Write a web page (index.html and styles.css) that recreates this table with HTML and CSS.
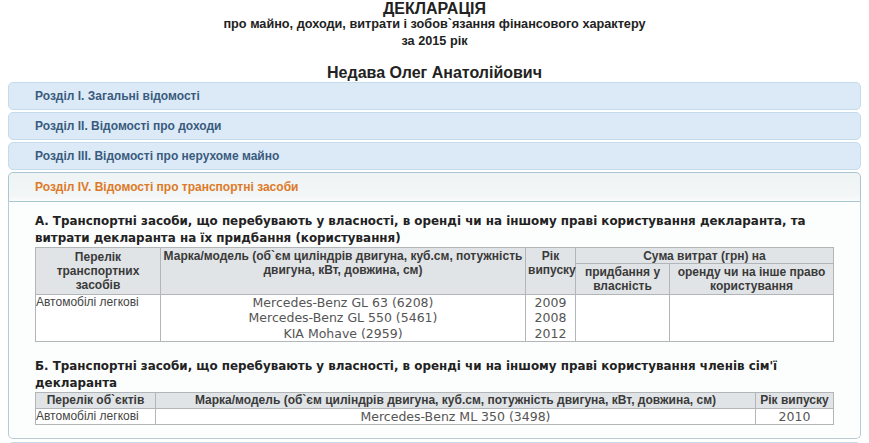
FILE: index.html
```html
<!DOCTYPE html>
<html lang="uk">
<head>
<meta charset="utf-8">
<title>Декларація</title>
<link rel="stylesheet" href="styles.css">
</head>
<body>
<header class="doc-head">
  <h1 class="doc-title">ДЕКЛАРАЦІЯ</h1>
  <p class="doc-sub">про майно, доходи, витрати і зобов`язання фінансового характеру</p>
  <p class="doc-sub year">за 2015 рік</p>
  <h2 class="person">Недава Олег Анатолійович</h2>
</header>
<div class="accordion">
  <h3 class="acc-head">Розділ I. Загальні відомості</h3>
  <h3 class="acc-head">Розділ II. Відомості про доходи</h3>
  <h3 class="acc-head">Розділ III. Відомості про нерухоме майно</h3>
  <h3 class="acc-head active">Розділ IV. Відомості про транспортні засоби</h3>
  <div class="acc-content">
    <h4 class="sec-title">А. Транспортні засоби, що перебувають у власності, в оренді чи на іншому праві користування декларанта, та витрати декларанта на їх придбання (користування)</h4>
    <table class="grid grid-a">
      <colgroup>
        <col class="c1"><col class="c2"><col class="c3"><col class="c4"><col class="c5">
      </colgroup>
      <thead>
        <tr class="row-top">
          <th rowspan="2">Перелік транспортних засобів</th>
          <th rowspan="2" class="top">Марка/модель (об`єм циліндрів двигуна, куб.см, потужність двигуна, кВт, довжина, см)</th>
          <th rowspan="2" class="top">Рік випуску</th>
          <th colspan="2">Сума витрат (грн) на</th>
        </tr>
        <tr class="row-sub">
          <th>придбання у власність</th>
          <th>оренду чи на інше право користування</th>
        </tr>
      </thead>
      <tbody>
        <tr class="row-data">
          <td class="kind">Автомобілі легкові</td>
          <td class="mid">Mercedes-Benz GL 63 (6208)<br>Mercedes-Benz GL 550 (5461)<br>KIA Mohave (2959)</td>
          <td class="mid">2009<br>2008<br>2012</td>
          <td></td>
          <td></td>
        </tr>
      </tbody>
    </table>
    <h4 class="sec-title sec-b">Б. Транспортні засоби, що перебувають у власності, в оренді чи на іншому праві користування членів сім'ї декларанта</h4>
    <table class="grid grid-b">
      <colgroup>
        <col class="b1"><col class="b2"><col class="b3">
      </colgroup>
      <thead>
        <tr class="row-one">
          <th>Перелік об`єктів</th>
          <th>Марка/модель (об`єм циліндрів двигуна, куб.см, потужність двигуна, кВт, довжина, см)</th>
          <th>Рік випуску</th>
        </tr>
      </thead>
      <tbody>
        <tr class="row-one">
          <td class="kind">Автомобілі легкові</td>
          <td class="mid">Mercedes-Benz ML 350 (3498)</td>
          <td class="mid">2010</td>
        </tr>
      </tbody>
    </table>
  </div>
  <h3 class="acc-head">Розділ V. Відомості про вклади у банках, цінні папери та інші активи</h3>
</div>
</body>
</html>
```

FILE: styles.css
```css
html, body {
  margin: 0;
  padding: 0;
  background: #ffffff;
}
body {
  padding: 0 8px;
  font-family: "Liberation Sans", Arial, sans-serif;
  color: #222;
}
.doc-head {
  text-align: center;
}
.doc-title {
  margin: 0;
  font-size: 16px;
  line-height: 17px;
  font-weight: bold;
  color: #222;
}
.doc-sub {
  margin: 0;
  font-size: 12.7px;
  line-height: 14px;
  font-weight: bold;
  color: #222;
}
.doc-sub.year {
  margin-top: 3px;
}
.person {
  margin: 16px 0 0;
  font-size: 16px;
  line-height: 18px;
  font-weight: bold;
  color: #222;
}
.accordion {
  margin-top: 0;
}
.acc-head {
  margin: 2px 0 0;
  padding: 6px 6px 6px 26px;
  font-size: 12px;
  line-height: 14px;
  font-weight: bold;
  color: #3a5b7d;
  background: #dceaf8;
  border: 1px solid #c5dbec;
  border-radius: 5px;
}
.acc-head:first-child {
  margin-top: 0;
}
.acc-head:last-child {
  margin-top: 3px;
}
.acc-head.active {
  padding-top: 7px;
  padding-bottom: 7px;
  color: #dd7a28;
  background: linear-gradient(#eef3f4, #f3f6f7 80%, #fafbfb);
  border-color: #a9c6d4;
  border-radius: 5px 5px 0 0;
  margin-bottom: 0;
}
.acc-content {
  border: 1px solid #b9ccd6;
  border-top: 0;
  border-radius: 0 0 5px 5px;
  background: #fcfdfd;
  padding: 11px 26px 13px;
}
.sec-title {
  margin: 0;
  font-family: "DejaVu Sans", Verdana, sans-serif;
  font-size: 11.9px;
  line-height: 17px;
  font-weight: bold;
  color: #222;
}
.sec-b {
  margin-top: 16px;
}
.grid {
  width: 100%;
  border-collapse: collapse;
  table-layout: fixed;
  margin-top: 0;
}
.grid th, .grid td {
  border: 1px solid #b3b6b8;
  padding: 0 2px;
  color: #333;
}
.grid th {
  background: #e1e4e7;
  font-family: "Liberation Sans", Arial, sans-serif;
  font-size: 12px;
  font-weight: bold;
  color: #3a3a3a;
  line-height: 15px;
  vertical-align: middle;
  text-align: center;
}
.grid th.top {
  vertical-align: top;
  padding-top: 1px;
}
.grid td {
  background: #ffffff;
  vertical-align: top;
  font-family: "DejaVu Sans", Verdana, sans-serif;
  font-size: 12.5px;
  line-height: 15.3px;
  color: #555;
}
.grid td.kind {
  font-family: "Liberation Sans", Arial, sans-serif;
  font-size: 12px;
  text-align: left;
  padding-left: 0;
  color: #444;
}
.grid td.mid {
  text-align: center;
}
.c1 { width: 125px; }
.c2 { width: 365px; }
.c3 { width: 50px; }
.c4 { width: 94px; }
.c5 { width: auto; }
.row-top { height: 16px; }
.row-sub { height: 31px; }
.row-data { height: 46px; }
.row-top th, .row-sub th { line-height: 14px; }
.row-one { height: 16px; }
.grid-b th, .grid-b td {
  line-height: 15px;
}
.b1 { width: 120px; }
.b2 { width: auto; }
.b3 { width: 78px; }
```
